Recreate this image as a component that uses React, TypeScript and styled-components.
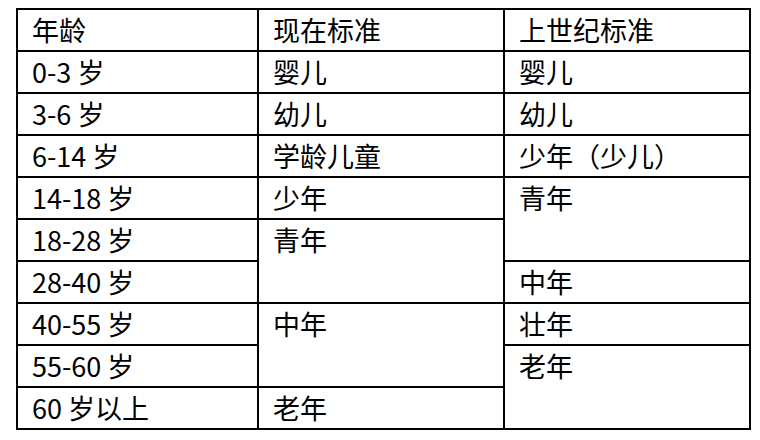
import React from 'react'
import styled, { createGlobalStyle } from 'styled-components'

const GlobalStyle = createGlobalStyle`
  html, body {
    margin: 0;
    padding: 0;
    background: #fff;
  }
`

const Page = styled.div`
  width: 760px;
  height: 440px;
  padding: 8px 0 0 16px;
  box-sizing: border-box;
  background: #fff;
`

const Table = styled.table`
  border-collapse: collapse;
  table-layout: fixed;
  width: 733px;
  font-family: "Noto Sans CJK SC", "Noto Sans", sans-serif;
  font-size: 27px;
  font-weight: 400;
  color: #000;
`

const Col = styled.col<{ $w: number }>`
  width: ${p => p.$w}px;
`

const Row = styled.tr`
  height: 42px;
`

const Cell = styled.td`
  border: 2px solid #000;
  padding: 0 14px;
  vertical-align: top;
  line-height: 40px;
  white-space: nowrap;
`

type CellData = { text: string; span?: number }

const rows: CellData[][] = [
  [{ text: '年龄' }, { text: '现在标准' }, { text: '上世纪标准' }],
  [{ text: '0-3 岁' }, { text: '婴儿' }, { text: '婴儿' }],
  [{ text: '3-6 岁' }, { text: '幼儿' }, { text: '幼儿' }],
  [{ text: '6-14 岁' }, { text: '学龄儿童' }, { text: '少年（少儿）' }],
  [{ text: '14-18 岁' }, { text: '少年' }, { text: '青年', span: 2 }],
  [{ text: '18-28 岁' }, { text: '青年', span: 2 }],
  [{ text: '28-40 岁' }, { text: '中年' }],
  [{ text: '40-55 岁' }, { text: '中年', span: 2 }, { text: '壮年' }],
  [{ text: '55-60 岁' }, { text: '老年', span: 2 }],
  [{ text: '60 岁以上' }, { text: '老年' }],
]

const App = () => {
  return (
    <Page>
      <GlobalStyle />
      <Table>
        <colgroup>
          <Col $w={241} />
          <Col $w={246} />
          <Col $w={246} />
        </colgroup>
        <tbody>
          {rows.map((row, i) => (
            <Row key={i}>
              {row.map((cell, j) => (
                <Cell key={j} rowSpan={cell.span}>{cell.text}</Cell>
              ))}
            </Row>
          ))}
        </tbody>
      </Table>
    </Page>
  )
}

export default App
